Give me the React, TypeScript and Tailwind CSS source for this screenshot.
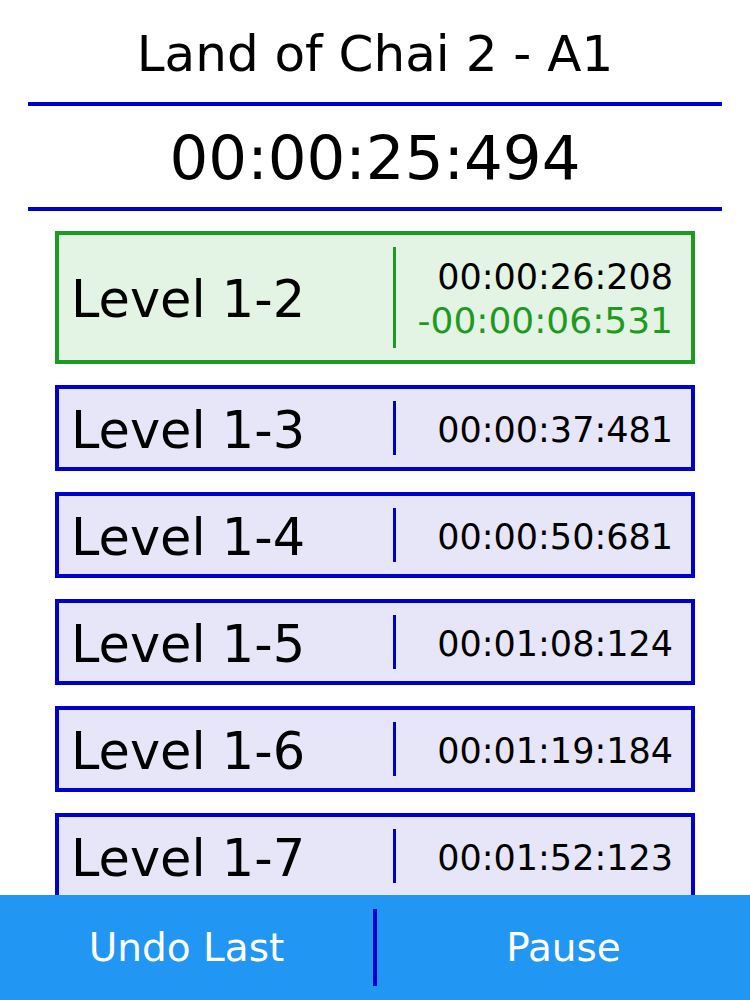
const splits = [
    { name: "Level 1-3", time: "00:00:37:481" },
    { name: "Level 1-4", time: "00:00:50:681" },
    { name: "Level 1-5", time: "00:01:08:124" },
    { name: "Level 1-6", time: "00:01:19:184" },
    { name: "Level 1-7", time: "00:01:52:123" },
];

const App = () => {
    return (
        <div
            className="h-[1000px] w-full bg-white flex flex-col overflow-hidden text-black"
            style={{ fontFamily: "'DejaVu Sans', Verdana, sans-serif" }}
        >
            {/* Title */}
            <div className="h-[102px] flex items-center justify-center text-[50px] pt-[7px]">
                Land of Chai 2 - A1
            </div>
            <div className="mx-[28px] h-[4px] bg-[#0000cc]" />

            {/* Running timer */}
            <div className="h-[101px] flex items-center justify-center text-[61px] pt-[2px]">
                00:00:25:494
            </div>
            <div className="mx-[28px] h-[4px] bg-[#0000cc]" />

            {/* Splits */}
            <div className="flex-1 overflow-hidden">
                <div className="flex flex-col gap-[21px] pt-[20px]">
                    {/* Current split */}
                    <div className="mx-[55px] h-[133px] shrink-0 flex border-[4px] border-[#1e9a22] bg-[#e3f3e4]">
                        <div className="w-[334px] flex items-center pl-[12px] text-[51px] pt-[6px]">
                            Level 1-2
                        </div>
                        <div className="w-[3px] my-[12px] bg-[#1e9a22]" />
                        <div className="flex-1 flex flex-col justify-center items-end pr-[18px] text-[35px] leading-[44px] pt-[2px]">
                            <span>00:00:26:208</span>
                            <span className="text-[36px] text-[#1e9a22]">-00:00:06:531</span>
                        </div>
                    </div>

                    {splits.map((split, index) => (
                        <div
                            key={index}
                            className="mx-[55px] h-[86px] shrink-0 flex border-[4px] border-[#0000cc] bg-[#e6e6f8]"
                        >
                            <div className="w-[334px] flex items-center pl-[12px] text-[51px] pt-[6px]">
                                {split.name}
                            </div>
                            <div className="w-[3px] my-[12px] bg-[#0000cc]" />
                            <div className="flex-1 flex items-center justify-end pr-[18px] text-[35px] pt-[5px]">
                                {split.time}
                            </div>
                        </div>
                    ))}
                </div>
            </div>

            {/* Footer buttons */}
            <div className="h-[105px] shrink-0 flex bg-[#2196f3] text-white text-[39px] leading-none">
                <div className="w-[373px] flex items-center justify-center">Undo Last</div>
                <div className="w-[4px] my-[14px] bg-[#0000cc]" />
                <div className="flex-1 flex items-center justify-center">Pause</div>
            </div>
        </div>
    );
};

export default App;
